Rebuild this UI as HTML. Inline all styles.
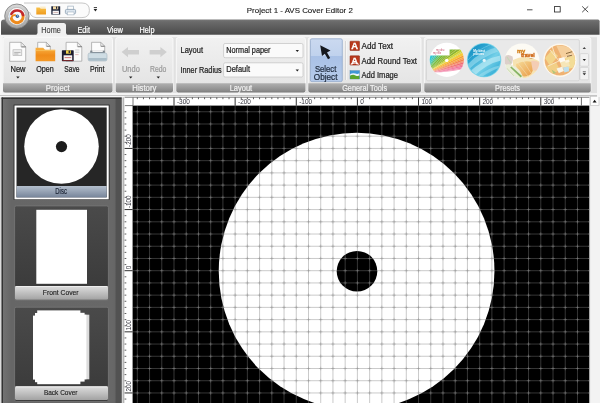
<!DOCTYPE html>
<html><head><meta charset="utf-8"><title>Project 1 - AVS Cover Editor 2</title>
<style>
html,body{margin:0;padding:0;background:#fff;overflow:hidden}
svg{display:block;will-change:transform;font-family:'Liberation Sans', sans-serif}
</style></head><body>
<svg width="600" height="403" viewBox="0 0 600 403">

<defs>
<linearGradient id="gDark" x1="0" y1="0" x2="0" y2="1"><stop offset="0" stop-color="#787878"/><stop offset="0.15" stop-color="#6a6a6a"/><stop offset="1" stop-color="#4a4a4a"/></linearGradient>
<linearGradient id="gGroup" x1="0" y1="0" x2="0" y2="1"><stop offset="0" stop-color="#f1f1f1"/><stop offset="1" stop-color="#e2e2e2"/></linearGradient>
<linearGradient id="gLabel" x1="0" y1="0" x2="0" y2="1"><stop offset="0" stop-color="#b0b0b0"/><stop offset="0.85" stop-color="#888"/><stop offset="1" stop-color="#707070"/></linearGradient>
<linearGradient id="gSel" x1="0" y1="0" x2="0" y2="1"><stop offset="0" stop-color="#cbd9f0"/><stop offset="0.4" stop-color="#c0d2ed"/><stop offset="0.4" stop-color="#a9c1e6"/><stop offset="1" stop-color="#b6cbea"/></linearGradient>
<linearGradient id="gThumbSelLbl" x1="0" y1="0" x2="0" y2="1"><stop offset="0" stop-color="#b4bfcd"/><stop offset="1" stop-color="#77859a"/></linearGradient>
<linearGradient id="gThumbLbl" x1="0" y1="0" x2="0" y2="1"><stop offset="0" stop-color="#dedede"/><stop offset="1" stop-color="#a2a2a2"/></linearGradient>
<linearGradient id="gThumbBg" x1="0" y1="0" x2="0" y2="1"><stop offset="0" stop-color="#4a4a4a"/><stop offset="1" stop-color="#393939"/></linearGradient>
<linearGradient id="gFolder" x1="0" y1="0" x2="0" y2="1"><stop offset="0" stop-color="#f8b244"/><stop offset="0.55" stop-color="#f08c1a"/><stop offset="1" stop-color="#f39826"/></linearGradient>
<linearGradient id="gPanel" x1="0" y1="0" x2="1" y2="0"><stop offset="0" stop-color="#747474"/><stop offset="0.08" stop-color="#666"/><stop offset="0.92" stop-color="#686868"/><stop offset="1" stop-color="#606060"/></linearGradient>
<linearGradient id="gOrbRing" x1="0" y1="0" x2="0" y2="1"><stop offset="0" stop-color="#dadada"/><stop offset="0.5" stop-color="#bcbcbc"/><stop offset="1" stop-color="#a2a2a2"/></linearGradient>
<linearGradient id="gFolderY" x1="0" y1="0" x2="0" y2="1"><stop offset="0" stop-color="#f8c24a"/><stop offset="1" stop-color="#ef9a1c"/></linearGradient>
<radialGradient id="gOrb" cx="0.5" cy="0.5" r="0.5"><stop offset="0" stop-color="#ffffff"/><stop offset="0.72" stop-color="#f4f4f4"/><stop offset="0.8" stop-color="#c8c8c8"/><stop offset="0.92" stop-color="#e8e8e8"/><stop offset="1" stop-color="#9a9a9a"/></radialGradient>
<linearGradient id="gBlueDisc" x1="0" y1="0" x2="1" y2="1"><stop offset="0" stop-color="#1287bb"/><stop offset="0.3" stop-color="#2aa3d0"/><stop offset="0.6" stop-color="#74d0e8"/><stop offset="1" stop-color="#1c9fce"/></linearGradient>
<clipPath id="cCanvas"><rect x="132.6" y="105.6" width="456.9" height="298"/></clipPath>
<clipPath id="cD1"><circle cx="446.8" cy="59.8" r="17.1"/></clipPath>
<clipPath id="cBand1"><path d="M428 55.6 H449.6 V49.6 H466 V68.6 Q452 71.6 441 72.2 H428 Z"/></clipPath>
<clipPath id="cD2"><circle cx="484.1" cy="60.1" r="16.3"/></clipPath>
<clipPath id="cD3"><circle cx="522.1" cy="60.8" r="17.4"/></clipPath>
<clipPath id="cD4"><circle cx="559.9" cy="60.2" r="15.2"/></clipPath>
<linearGradient id="gMap3" x1="0" y1="0" x2="1" y2="1"><stop offset="0" stop-color="#f6dc9a"/><stop offset="1" stop-color="#e99a44"/></linearGradient>
</defs>

<rect x="0" y="0" width="600" height="403" fill="#ffffff"/>
<rect x="0" y="35" width="600" height="62" fill="#e1e1e1"/>
<rect x="0" y="34.8" width="600" height="2.4" fill="#f3f3f3"/>
<rect x="0" y="34.8" width="2.8" height="62" fill="#f6f6f6"/>
<rect x="0" y="93" width="600" height="4.5" fill="#f4f4f4"/>
<rect x="0" y="95" width="600" height="1" fill="#c4c4c4"/>
<path d="M1 34.8 V22.6 Q1 19.6 4 19.6 H598 Q599.6 19.6 599.6 21.2 V34.8 Z" fill="url(#gDark)"/>
<path d="M35 35.5 Q37 35 37.5 33 V25.5 Q37.5 23 40 23 H63.5 Q66 23 66 25.5 V33 Q66.5 35 68.5 35.5 Z" fill="#f0f0f0"/>
<text x="41.3" y="32.8" font-size="8.3" fill="#3a3a3a" text-anchor="start" textLength="19.5" lengthAdjust="spacingAndGlyphs"  stroke="#3a3a3a" stroke-width="0.12">Home</text>
<text x="77.5" y="32.8" font-size="8.3" fill="#fff" text-anchor="start" textLength="12.5" lengthAdjust="spacingAndGlyphs"  stroke="#fff" stroke-width="0.22">Edit</text>
<text x="107" y="32.8" font-size="8.3" fill="#fff" text-anchor="start" textLength="16" lengthAdjust="spacingAndGlyphs"  stroke="#fff" stroke-width="0.22">View</text>
<text x="139.5" y="32.8" font-size="8.3" fill="#fff" text-anchor="start" textLength="15" lengthAdjust="spacingAndGlyphs"  stroke="#fff" stroke-width="0.22">Help</text>
<text x="246.8" y="12.7" font-size="7.8" fill="#1a1a1a" text-anchor="start" textLength="106" lengthAdjust="spacingAndGlyphs"  stroke="#1a1a1a" stroke-width="0.12">Project 1 - AVS Cover Editor 2</text>
<path d="M527 9.8 H532.5" stroke="#222" stroke-width="0.8" fill="none"/>
<rect x="554.6" y="6.6" width="5.6" height="5.4" stroke="#222" stroke-width="0.8" fill="none"/>
<path d="M582.2 6.4 L588.2 12.2 M588.2 6.4 L582.2 12.2" stroke="#222" stroke-width="0.8" fill="none"/>
<path d="M24 3 H82 Q89.4 3 89.4 10.3 Q89.4 17.6 82 17.6 H36 Q31 17 29.5 12" stroke="#b9b9b9" stroke-width="0.8" fill="#fbfbfb"/>
<circle cx="16.9" cy="16.2" r="12.2" fill="url(#gOrbRing)" stroke="#7a7a7a" stroke-width="0.8"/>
<circle cx="16.9" cy="16.3" r="8.9" fill="#fbfbfb" stroke="#a8a8a8" stroke-width="0.6"/>
<path d="M10.69 20.30 A7.4 7.4 0 0 1 11.87 11.37" fill="none" stroke="#c9dbec" stroke-width="1.4" stroke-linecap="round"/>
<path d="M22.63 14.02 A6.1 6.1 0 1 1 11.37 18.69" fill="none" stroke="#ee8a1c" stroke-width="3.0" stroke-linecap="round"/>
<path d="M11.39 14.04 A6.3 6.3 0 0 1 23.19 15.07" fill="none" stroke="#c2282d" stroke-width="2.5" stroke-linecap="round"/>
<path d="M11.6 18.6 Q11.6 14.6 15.2 15.2" fill="none" stroke="#ee8a1c" stroke-width="1.9" stroke-linecap="round"/>
<circle cx="17.4" cy="16.2" r="1.7" fill="#2f5f9e"/>
<circle cx="17.7" cy="15.9" r="0.7" fill="#c6dcf2"/>
<path d="M40.2 6.5 H45.6 V10 H40.2 Z" fill="#fcecc8"/>
<path d="M36.3 7.4 H39.6 L40.8 8.8 H46 V14.6 H36.3 Z" fill="url(#gFolderY)"/>
<rect x="51.3" y="6.3" width="8.9" height="8.3" fill="#1b2238"/>
<rect x="53" y="6.3" width="5.2" height="3" fill="#f0d8a4"/>
<rect x="56" y="6.6" width="1.2" height="2.2" fill="#1b2238"/>
<rect x="52.6" y="10.7" width="6.3" height="3.5" fill="#f6f6f6"/>
<rect x="53.4" y="12" width="4.7" height="0.7" fill="#c9a0a0"/>
<rect x="67.8" y="6.1" width="5.6" height="4" fill="#fdfdfd" stroke="#8fa2b4" stroke-width="0.6"/>
<rect x="65.4" y="9.4" width="10.2" height="4.4" rx="1.2" fill="#dbe5ee" stroke="#7f94a8" stroke-width="0.7"/>
<rect x="67.2" y="12" width="6.8" height="2.9" fill="#fff" stroke="#8fa2b4" stroke-width="0.5"/>
<path d="M93.8 7.6 H97" stroke="#222" stroke-width="0.9"/>
<path d="M93.6 9 H97.2 L95.4 11.4 Z" fill="#222"/>
<rect x="3" y="37.6" width="109.5" height="55" rx="2" fill="url(#gGroup)" stroke="#fafafa" stroke-width="0.9"/>
<path d="M3 83.2 H112.5 V90.6 Q112.5 92.6 110.5 92.6 H5 Q3 92.6 3 90.6 Z" fill="url(#gLabel)"/>
<text x="45.75" y="90.6" font-size="8.3" fill="#f2f2f2" text-anchor="start" textLength="24" lengthAdjust="spacingAndGlyphs"  stroke="#f2f2f2" stroke-width="0.22">Project</text>
<rect x="115.7" y="37.6" width="57.3" height="55" rx="2" fill="url(#gGroup)" stroke="#fafafa" stroke-width="0.9"/>
<path d="M115.7 83.2 H173 V90.6 Q173 92.6 171 92.6 H117.7 Q115.7 92.6 115.7 90.6 Z" fill="url(#gLabel)"/>
<text x="132.35" y="90.6" font-size="8.3" fill="#f2f2f2" text-anchor="start" textLength="24" lengthAdjust="spacingAndGlyphs"  stroke="#f2f2f2" stroke-width="0.22">History</text>
<rect x="176.3" y="37.6" width="129.2" height="55" rx="2" fill="url(#gGroup)" stroke="#fafafa" stroke-width="0.9"/>
<path d="M176.3 83.2 H305.5 V90.6 Q305.5 92.6 303.5 92.6 H178.3 Q176.3 92.6 176.3 90.6 Z" fill="url(#gLabel)"/>
<text x="229.65" y="90.6" font-size="8.3" fill="#f2f2f2" text-anchor="start" textLength="22.5" lengthAdjust="spacingAndGlyphs"  stroke="#f2f2f2" stroke-width="0.22">Layout</text>
<rect x="308.3" y="37.6" width="112.69999999999999" height="55" rx="2" fill="url(#gGroup)" stroke="#fafafa" stroke-width="0.9"/>
<path d="M308.3 83.2 H421 V90.6 Q421 92.6 419 92.6 H310.3 Q308.3 92.6 308.3 90.6 Z" fill="url(#gLabel)"/>
<text x="342.15" y="90.6" font-size="8.3" fill="#f2f2f2" text-anchor="start" textLength="45" lengthAdjust="spacingAndGlyphs"  stroke="#f2f2f2" stroke-width="0.22">General Tools</text>
<rect x="424.3" y="37.6" width="166.49999999999994" height="55" rx="2" fill="url(#gGroup)" stroke="#fafafa" stroke-width="0.9"/>
<path d="M424.3 83.2 H590.8 V90.6 Q590.8 92.6 588.8 92.6 H426.3 Q424.3 92.6 424.3 90.6 Z" fill="url(#gLabel)"/>
<text x="495.04999999999995" y="90.6" font-size="8.3" fill="#f2f2f2" text-anchor="start" textLength="25" lengthAdjust="spacingAndGlyphs"  stroke="#f2f2f2" stroke-width="0.22">Presets</text>
<path d="M9.7 42.3 H21.1 L25.7 46.9 V61.3 H9.7 Z" fill="#fcfcfc" stroke="#9c9c9c" stroke-width="0.7"/>
<path d="M21.1 42.3 V46.9 H25.7 Z" fill="#ededed" stroke="#9c9c9c" stroke-width="0.6"/>
<path d="M21.5 46.9 H25.7" stroke="#6a6a6a" stroke-width="0.7"/>
<rect x="13" y="49.8" width="8.8" height="5.8" fill="#efefef" stroke="#a9a9a9" stroke-width="0.6"/>
<path d="M14.2 52.4 H20.6 M14.2 54 H18.4" stroke="#9a9a9a" stroke-width="0.7"/>
<path d="M37.7 42.3 H46.300000000000004 L50.300000000000004 46.3 V52.3 H37.7 Z" fill="#fcfcfc" stroke="#9c9c9c" stroke-width="0.7"/>
<path d="M46.300000000000004 42.3 V46.3 H50.300000000000004 Z" fill="#ededed" stroke="#9c9c9c" stroke-width="0.6"/>
<path d="M46.7 46.3 H50.300000000000004" stroke="#6a6a6a" stroke-width="0.7"/>
<path d="M35.6 47.8 H43.2 L45 49.7 H55.2 V61.2 H35.6 Z" fill="url(#gFolder)"/>
<path d="M35.6 50.4 H55.2" stroke="#fbc766" stroke-width="0.7"/>
<path d="M66.1 42.3 H77.39999999999999 L81.8 46.699999999999996 V61.199999999999996 H66.1 Z" fill="#fcfcfc" stroke="#9c9c9c" stroke-width="0.7"/>
<path d="M77.39999999999999 42.3 V46.699999999999996 H81.8 Z" fill="#ededed" stroke="#9c9c9c" stroke-width="0.6"/>
<path d="M77.8 46.699999999999996 H81.8" stroke="#6a6a6a" stroke-width="0.7"/>
<path d="M75.2 50 H79.4 M75.2 52.2 H79.4" stroke="#bcbcbc" stroke-width="0.7"/>
<path d="M75.2 54.6 H78.6" stroke="#d9a0a0" stroke-width="0.7"/>
<rect x="61.9" y="50.3" width="11.8" height="10.9" rx="0.6" fill="#1c1c30"/>
<rect x="66" y="50.3" width="4.8" height="3.4" fill="#efd24a"/>
<rect x="68.6" y="50.7" width="1.3" height="2.5" fill="#1c1c30"/>
<rect x="63.6" y="55.3" width="8.6" height="4.7" fill="#f7f4f4"/>
<rect x="64.6" y="57.2" width="6.6" height="0.9" fill="#c96a6a"/>
<rect x="62.4" y="60.2" width="10.8" height="0.8" fill="#8a2a2a"/>
<path d="M91.6 42.3 H100.69999999999999 L104.69999999999999 46.3 V52.8 H91.6 Z" fill="#fcfcfc" stroke="#9c9c9c" stroke-width="0.7"/>
<path d="M100.69999999999999 42.3 V46.3 H104.69999999999999 Z" fill="#ededed" stroke="#9c9c9c" stroke-width="0.6"/>
<path d="M101.1 46.3 H104.69999999999999" stroke="#6a6a6a" stroke-width="0.7"/>
<rect x="90.2" y="50.6" width="14.6" height="3" fill="#7e8890"/>
<rect x="92.4" y="50.2" width="10.4" height="1.8" fill="#f2f2f2"/>
<rect x="88.1" y="53" width="18.9" height="8" rx="1.8" fill="#cfdde4" stroke="#a4b6c0" stroke-width="0.6"/>
<path d="M88.4 58 H106.7 V59.4 Q106.7 60.8 105 60.8 H90.1 Q88.4 60.8 88.4 59.4 Z" fill="#aabdc8"/>
<text x="10.5" y="72.2" font-size="8.3" fill="#222" text-anchor="start" textLength="15" lengthAdjust="spacingAndGlyphs"  stroke="#222" stroke-width="0.22">New</text>
<text x="36.3" y="72.2" font-size="8.3" fill="#222" text-anchor="start" textLength="17.5" lengthAdjust="spacingAndGlyphs"  stroke="#222" stroke-width="0.22">Open</text>
<text x="64.3" y="72.2" font-size="8.3" fill="#222" text-anchor="start" textLength="15.3" lengthAdjust="spacingAndGlyphs"  stroke="#222" stroke-width="0.22">Save</text>
<text x="90" y="72.2" font-size="8.3" fill="#222" text-anchor="start" textLength="14.5" lengthAdjust="spacingAndGlyphs"  stroke="#222" stroke-width="0.22">Print</text>
<path d="M16.2 76.6 H19.6 L17.9 78.6 Z" fill="#222"/>
<path d="M121.6 52 L128 47 V50 H139 V54.4 H128 V57.2 Z" fill="#cfcfcf"/>
<path d="M166.8 52 L160.4 47 V50 H149.6 V54.4 H160.4 V57.2 Z" fill="#cfcfcf"/>
<text x="122" y="72.2" font-size="8.3" fill="#9a9a9a" text-anchor="start" textLength="17.8" lengthAdjust="spacingAndGlyphs"  stroke="#9a9a9a" stroke-width="0.22">Undo</text>
<text x="150" y="72.2" font-size="8.3" fill="#9a9a9a" text-anchor="start" textLength="16.4" lengthAdjust="spacingAndGlyphs"  stroke="#9a9a9a" stroke-width="0.22">Redo</text>
<path d="M129 76.6 H132.4 L130.7 78.6 Z" fill="#222"/>
<path d="M156.6 76.6 H160 L158.3 78.6 Z" fill="#222"/>
<text x="180.5" y="53.4" font-size="8.3" fill="#222" text-anchor="start" textLength="22.5" lengthAdjust="spacingAndGlyphs"  stroke="#222" stroke-width="0.22">Layout</text>
<text x="180.5" y="73.2" font-size="8.3" fill="#222" text-anchor="start" textLength="41.2" lengthAdjust="spacingAndGlyphs"  stroke="#222" stroke-width="0.22">Inner Radius</text>
<rect x="223.6" y="43.5" width="79.4" height="14.2" rx="1.5" fill="#fafafa" stroke="#c2c2c2" stroke-width="0.7"/>
<text x="226.3" y="52.6" font-size="8.3" fill="#222" text-anchor="start" textLength="44.2" lengthAdjust="spacingAndGlyphs"  stroke="#222" stroke-width="0.22">Normal paper</text>
<path d="M295.6 50.1 H299 L297.3 52.1 Z" fill="#222"/>
<rect x="223.6" y="62.8" width="79.4" height="14.2" rx="1.5" fill="#fafafa" stroke="#c2c2c2" stroke-width="0.7"/>
<text x="226.3" y="71.89999999999999" font-size="8.3" fill="#222" text-anchor="start" textLength="23.7" lengthAdjust="spacingAndGlyphs"  stroke="#222" stroke-width="0.22">Default</text>
<path d="M295.6 69.39999999999999 H299 L297.3 71.39999999999999 Z" fill="#222"/>
<rect x="310.4" y="38.8" width="31.9" height="42.8" rx="1.5" fill="url(#gSel)" stroke="#93a9cc" stroke-width="0.8"/>
<path d="M320.2 45.2 L330.5 50.4 L327 52.4 L330.2 58 L328 59.3 L324.8 53.8 L322 56.1 Z" fill="#15181e"/>
<text x="315" y="72.2" font-size="8.3" fill="#1e2a3c" text-anchor="start" textLength="21.3" lengthAdjust="spacingAndGlyphs"  stroke="#1e2a3c" stroke-width="0.22">Select</text>
<text x="313.8" y="80" font-size="8.3" fill="#1e2a3c" text-anchor="start" textLength="23.7" lengthAdjust="spacingAndGlyphs"  stroke="#1e2a3c" stroke-width="0.22">Object</text>
<path d="M345.6 41 V80" stroke="#cbcbcb" stroke-width="0.8"/>
<path d="M346.4 41 V80" stroke="#fafafa" stroke-width="0.8"/>
<rect x="350" y="41.2" width="9.5" height="9.3" rx="0.5" fill="#b8381d" stroke="#8a2410" stroke-width="0.5"/>
<text x="354.75" y="49.400000000000006" font-size="9.4" font-weight="bold" fill="#fff" text-anchor="middle" stroke="#fff" stroke-width="0.3">A</text>
<rect x="350" y="55.8" width="9.5" height="9.3" rx="0.5" fill="#b8381d" stroke="#8a2410" stroke-width="0.5"/>
<text x="354.75" y="64.0" font-size="9.4" font-weight="bold" fill="#fff" text-anchor="middle" stroke="#fff" stroke-width="0.3">A</text>
<path d="M350.6 64.4 Q354.75 61.6 358.9 64.4" stroke="#fff" stroke-width="1.1" fill="none"/>
<rect x="350" y="70.7" width="9.5" height="8.3" fill="#3f97d6" stroke="#3b78a8" stroke-width="0.4"/>
<path d="M350.2 74 Q353 72.6 355.2 73.6 Q357.6 74.6 359.3 73.2 V76 H350.2 Z" fill="#eef6fb"/>
<path d="M350.2 78.9 V75.6 Q353 74.2 355.4 75.4 Q357.6 76.4 359.3 75.6 V78.9 Z" fill="#5aa52e"/>
<text x="361.5" y="48.8" font-size="8.3" fill="#222" text-anchor="start" textLength="31.5" lengthAdjust="spacingAndGlyphs"  stroke="#222" stroke-width="0.22">Add Text</text>
<text x="361.5" y="63.6" font-size="8.3" fill="#222" text-anchor="start" textLength="55.5" lengthAdjust="spacingAndGlyphs"  stroke="#222" stroke-width="0.22">Add Round Text</text>
<text x="361.5" y="78.4" font-size="8.3" fill="#222" text-anchor="start" textLength="36.5" lengthAdjust="spacingAndGlyphs"  stroke="#222" stroke-width="0.22">Add Image</text>
<rect x="426.4" y="39.6" width="153" height="41.2" rx="1.5" fill="#e9e9e9" stroke="#cfcfcf" stroke-width="0.7"/>
<circle cx="446.8" cy="59.8" r="17.1" fill="#fff"/>
<g clip-path="url(#cD1)"><g clip-path="url(#cBand1)">
<path d="M423 75 L416.0 -4.7 L460.6 4.4 Z" fill="#35c8d8"/>
<path d="M423 75 L460.6 4.4 L470.0 10.3 Z" fill="#3cc0b0"/>
<path d="M423 75 L470.0 10.3 L477.6 16.5 Z" fill="#5cbf62"/>
<path d="M423 75 L477.6 16.5 L484.3 23.6 Z" fill="#78b830"/>
<path d="M423 75 L484.3 23.6 L489.3 30.3 Z" fill="#8fb52c"/>
<path d="M423 75 L489.3 30.3 L492.6 35.6 Z" fill="#c9d233"/>
<path d="M423 75 L492.6 35.6 L494.9 39.9 Z" fill="#f7c838"/>
<path d="M423 75 L494.9 39.9 L497.4 45.7 Z" fill="#f59c30"/>
<path d="M423 75 L497.4 45.7 L499.3 50.9 Z" fill="#f27f52"/>
<path d="M423 75 L499.3 50.9 L500.8 56.3 Z" fill="#f06c74"/>
<path d="M423 75 L500.8 56.3 L501.9 61.8 Z" fill="#f0709a"/>
<path d="M423 75 L501.9 61.8 L502.6 67.3 Z" fill="#f59ab8"/>
<path d="M423 75 L502.6 67.3 L503.0 75.0 Z" fill="#f9c4d4"/>
<path d="M423 75 L450.4 -0.2" stroke="#fff" stroke-opacity="0.45" stroke-width="0.7"/>
<path d="M423 75 L465.4 7.2" stroke="#fff" stroke-opacity="0.45" stroke-width="0.7"/>
<path d="M423 75 L474.4 13.7" stroke="#fff" stroke-opacity="0.45" stroke-width="0.7"/>
<path d="M423 75 L481.5 20.4" stroke="#fff" stroke-opacity="0.45" stroke-width="0.7"/>
<path d="M423 75 L486.9 26.9" stroke="#fff" stroke-opacity="0.45" stroke-width="0.7"/>
<path d="M423 75 L491.6 33.8" stroke="#fff" stroke-opacity="0.45" stroke-width="0.7"/>
<path d="M423 75 L496.4 43.1" stroke="#fff" stroke-opacity="0.45" stroke-width="0.7"/>
<path d="M423 75 L498.6 49.0" stroke="#fff" stroke-opacity="0.45" stroke-width="0.7"/>
<path d="M423 75 L500.3 54.3" stroke="#fff" stroke-opacity="0.45" stroke-width="0.7"/>
<path d="M423 75 L501.5 59.7" stroke="#fff" stroke-opacity="0.45" stroke-width="0.7"/>
</g></g>
<circle cx="446.7" cy="60.4" r="1.7" fill="#fff"/>
<text x="436" y="51.4" font-size="2.6" fill="#c8506c" text-anchor="start" >my disc</text>
<text x="433" y="54.2" font-size="2.6" fill="#c8506c" text-anchor="start" >my title</text>
<circle cx="484.1" cy="60.1" r="17.2" fill="#79d3e8"/>
<circle cx="484.1" cy="60.1" r="16.3" fill="url(#gBlueDisc)"/>
<g clip-path="url(#cD2)">
<path d="M466 66 Q480 50 503 46 L503 50 Q482 56 467 71 Z" fill="#a9e4f2" opacity="0.55"/>
<path d="M467 74 Q484 58 503 55 L503 60 Q486 63 471 79 Z" fill="#c6eef7" opacity="0.6"/>
<path d="M474 79 Q488 67 503 65 L503 67 Q490 70 478 80 Z" fill="#a9e4f2" opacity="0.5"/>
<path d="M466 62 Q476 50 492 44" stroke="#8fd8ec" stroke-opacity="0.6" stroke-width="0.8" fill="none"/>
</g>
<circle cx="484.2" cy="60.4" r="1.6" fill="#e4f5fa"/>
<text x="473.2" y="51.8" font-size="3.9" fill="#fff" text-anchor="start" textLength="12" lengthAdjust="spacingAndGlyphs" font-weight="bold">My best</text>
<text x="473.2" y="55" font-size="3.9" fill="#fff" text-anchor="start" textLength="11" lengthAdjust="spacingAndGlyphs" font-weight="bold">pictures</text>
<circle cx="522.1" cy="60.8" r="17.4" fill="#fdfbf4"/>
<g clip-path="url(#cD3)">
<path d="M504 56.5 Q508 53.5 512.5 56.5 Q514 62 510 66 Q506 66 504 63 Z" fill="#dccfca"/>
<path d="M507 57 L511 63" stroke="#c4d6b6" stroke-width="1.2"/>
<path d="M513 60 Q522 55.5 531 58 Q538 60 540 62 V70 Q534 78 524 79 Q516 76 513 70 Z" fill="#f6e3b2"/>
<path d="M516 64 Q524 60 532 62 Q535 68 531 74 Q525 78.5 520 75 Q516 69 516 64 Z" fill="url(#gMap3)"/>
<path d="M531 61 Q536 60 540 63 V69 Q536 72 532.6 70 Z" fill="#f4cdb4"/>
<path d="M505 65 Q510 63 516 67 Q522 72 523 78 Q514 80 508 75 Q505 70 505 65 Z" fill="#eaeed8"/>
<path d="M511.4 66.4 L522 76 L520.8 77.4 L510.2 67.6 Z" fill="#86b464"/>
<path d="M506.5 68 L514 76" stroke="#c3d6aa" stroke-width="0.8"/>
<path d="M517 62 L528 76 M523 60.5 L531 73" stroke="#f8ecd0" stroke-opacity="0.7" stroke-width="0.6"/>
</g>
<text x="517" y="52.5" font-size="5.4" fill="#d5821c" text-anchor="start" textLength="8.3" lengthAdjust="spacingAndGlyphs" font-weight="bold" stroke="#d5821c" stroke-width="0.35">my</text>
<text x="520.9" y="56.5" font-size="5.4" fill="#cf6a1a" text-anchor="start" textLength="13.9" lengthAdjust="spacingAndGlyphs" font-weight="bold" stroke="#cf6a1a" stroke-width="0.35">travel</text>
<text x="529.4" y="58.8" font-size="2.2" fill="#b8803a" text-anchor="start" >disc</text>
<circle cx="559.9" cy="60.2" r="16.7" fill="#fdf7ec"/>
<circle cx="559.9" cy="60.2" r="15.2" fill="#efb272"/>
<g clip-path="url(#cD4)">
<path d="M545 58 L552 50 L558 56 L550 66 Z" fill="#f3d58a"/>
<path d="M556 45 L570 47 L575 56 L562 58 Z" fill="#f5cf9c"/>
<path d="M546 66 L556 62 L560 70 L550 75 Z" fill="#f2cf86"/>
<path d="M565 58 L576 55 L576 67 L568 69 Z" fill="#f3dc96"/>
<path d="M560 62 L568 60 L570 66 L562 68 Z" fill="#f6e6b8"/>
<path d="M550 50 L559 61 M559 61 L572 54 M559 61 L548 66 M552 46 L556 58" stroke="#f9e8c8" stroke-width="0.9" fill="none"/>
<path d="M558.4 58.4 L564.4 57 L565.4 61 L560 62.6 Z" fill="#fefaf2"/>
<path d="M565 60.4 L569 59.6 L569.6 62 L565.6 62.8 Z" fill="#fbf3de"/>
<path d="M556.6 68.6 L562 66.8 L564 71 L558.8 73 Z" fill="#f8f4e8"/>
<path d="M563 67.6 L568.6 66.6 L569.2 71.2 L564.4 72.4 Z" fill="#bfe0ee"/>
<path d="M548.4 70.4 Q552.6 75.2 558.4 76.2 L557.4 77.8 Q551 76.4 547.4 72 Z" fill="#94602c"/>
<path d="M551.5 69.5 L556 72.6 L553.6 74 Z" fill="#b2c67a"/>
<path d="M566 53.6 L572.4 51.6 M567 56.4 L572 55.2" stroke="#6f5226" stroke-width="0.8"/>
</g>
<path d="M582.6 49 H586 L584.3 47 Z" fill="#444"/>
<rect x="580" y="53.6" width="8.6" height="12.6" rx="1" fill="#f2f2f2" stroke="#c9c9c9" stroke-width="0.6"/>
<path d="M582.6 59 H586 L584.3 61 Z" fill="#222"/>
<rect x="580" y="67.4" width="8.6" height="12.4" rx="1" fill="#f2f2f2" stroke="#c9c9c9" stroke-width="0.6"/>
<path d="M582.8 71.8 H585.8" stroke="#222" stroke-width="0.7"/>
<path d="M582.6 73.2 H586 L584.3 75.2 Z" fill="#222"/>
<rect x="0" y="97.4" width="1.6" height="306" fill="#dcdcdc"/>
<rect x="1.6" y="97.5" width="120.2" height="306" fill="url(#gPanel)"/>
<rect x="1.6" y="97.5" width="120.2" height="1.5" fill="#333"/>
<rect x="1.6" y="97.5" width="1.4" height="306" fill="#333"/>
<rect x="115.6" y="99" width="6.2" height="305" fill="#525252"/>
<rect x="121.8" y="97.4" width="1.6" height="306" fill="#d6d6d6"/>
<rect x="123.4" y="97.4" width="1.2" height="306" fill="#8f8f8f"/>
<rect x="13.6" y="104.6" width="96" height="95.2" fill="#2c2c2c"/>
<rect x="15.5" y="106.5" width="92.2" height="91.8" fill="#262626" stroke="#ffffff" stroke-width="2"/>
<rect x="16.5" y="186" width="90.2" height="11.4" fill="url(#gThumbSelLbl)"/>
<circle cx="61.5" cy="146.5" r="37.3" fill="#fff"/>
<circle cx="61.5" cy="146.6" r="5.6" fill="#1c1c1c"/>
<text x="61.1" y="194.2" font-size="8.3" fill="#1a2233" text-anchor="middle" textLength="11.6" lengthAdjust="spacingAndGlyphs"  stroke="#1a2233" stroke-width="0.15">Disc</text>
<rect x="14.6" y="205.9" width="93.8" height="94.2" rx="1.5" fill="url(#gThumbBg)" stroke="#747474" stroke-width="0.9"/>
<rect x="36.3" y="209.8" width="50.7" height="74" fill="#fff"/>
<rect x="15" y="286" width="93" height="13.8" rx="1.5" fill="url(#gThumbLbl)"/>
<rect x="15.4" y="286.2" width="92.2" height="0.8" fill="#f2f2f2"/>
<text x="60.7" y="295" font-size="7.8" fill="#222" text-anchor="middle" textLength="35.8" lengthAdjust="spacingAndGlyphs"  stroke="#222" stroke-width="0.15">Front Cover</text>
<rect x="14.6" y="307.2" width="93.8" height="94.2" rx="1.5" fill="url(#gThumbBg)" stroke="#747474" stroke-width="0.9"/>
<rect x="80" y="314.7" width="9.3" height="64.6" fill="#dcdcdc"/>
<rect x="80" y="314.7" width="6.4" height="64.6" fill="#fff"/>
<rect x="33" y="315.6" width="5" height="64" fill="#fff"/>
<rect x="35" y="313" width="3" height="69.2" fill="#fff"/>
<rect x="80" y="312.8" width="4.6" height="68.8" fill="#fff"/>
<rect x="37.2" y="310.4" width="43.2" height="73.8" fill="#fff"/>
<rect x="15" y="386.3" width="93" height="13.8" rx="1.5" fill="url(#gThumbLbl)"/>
<rect x="15.4" y="386.5" width="92.2" height="0.8" fill="#f2f2f2"/>
<text x="60.7" y="395.4" font-size="7.8" fill="#222" text-anchor="middle" textLength="33.6" lengthAdjust="spacingAndGlyphs"  stroke="#222" stroke-width="0.15">Back Cover</text>
<rect x="124.6" y="97" width="465" height="9" fill="#fff"/>
<rect x="124.4" y="97" width="8.2" height="306" fill="#fff"/>
<rect x="124.6" y="96.8" width="465" height="0.9" fill="#777"/>
<rect x="132.6" y="105.6" width="456.9" height="298" fill="#000"/>
<g clip-path="url(#cCanvas)">
<ellipse cx="356.6" cy="271.2" rx="137.85" ry="138.45" fill="#fff"/>
<circle cx="357" cy="271.2" r="20.3" fill="#000"/>
<path d="M137.33 105.6 V403 M149.56 105.6 V403 M161.78 105.6 V403 M174.01 105.6 V403 M186.24 105.6 V403 M198.46 105.6 V403 M210.69 105.6 V403 M222.91 105.6 V403 M235.14 105.6 V403 M247.37 105.6 V403 M259.59 105.6 V403 M271.82 105.6 V403 M284.04 105.6 V403 M296.27 105.6 V403 M308.50 105.6 V403 M320.72 105.6 V403 M332.95 105.6 V403 M345.17 105.6 V403 M357.40 105.6 V403 M369.63 105.6 V403 M381.85 105.6 V403 M394.08 105.6 V403 M406.30 105.6 V403 M418.53 105.6 V403 M430.76 105.6 V403 M442.98 105.6 V403 M455.21 105.6 V403 M467.43 105.6 V403 M479.66 105.6 V403 M491.89 105.6 V403 M504.11 105.6 V403 M516.34 105.6 V403 M528.56 105.6 V403 M540.79 105.6 V403 M553.02 105.6 V403 M565.24 105.6 V403 M577.47 105.6 V403 M133 111.76 H589.5 M133 123.99 H589.5 M133 136.21 H589.5 M133 148.44 H589.5 M133 160.67 H589.5 M133 172.89 H589.5 M133 185.12 H589.5 M133 197.34 H589.5 M133 209.57 H589.5 M133 221.80 H589.5 M133 234.02 H589.5 M133 246.25 H589.5 M133 258.47 H589.5 M133 270.70 H589.5 M133 282.93 H589.5 M133 295.15 H589.5 M133 307.38 H589.5 M133 319.60 H589.5 M133 331.83 H589.5 M133 344.06 H589.5 M133 356.28 H589.5 M133 368.51 H589.5 M133 380.73 H589.5 M133 392.96 H589.5" stroke="#808080" stroke-opacity="0.42" stroke-width="1" fill="none"/>
<path d="M137.33 105.6 V403 M149.56 105.6 V403 M161.78 105.6 V403 M174.01 105.6 V403 M186.24 105.6 V403 M198.46 105.6 V403 M210.69 105.6 V403 M222.91 105.6 V403 M235.14 105.6 V403 M247.37 105.6 V403 M259.59 105.6 V403 M271.82 105.6 V403 M284.04 105.6 V403 M296.27 105.6 V403 M308.50 105.6 V403 M320.72 105.6 V403 M332.95 105.6 V403 M345.17 105.6 V403 M357.40 105.6 V403 M369.63 105.6 V403 M381.85 105.6 V403 M394.08 105.6 V403 M406.30 105.6 V403 M418.53 105.6 V403 M430.76 105.6 V403 M442.98 105.6 V403 M455.21 105.6 V403 M467.43 105.6 V403 M479.66 105.6 V403 M491.89 105.6 V403 M504.11 105.6 V403 M516.34 105.6 V403 M528.56 105.6 V403 M540.79 105.6 V403 M553.02 105.6 V403 M565.24 105.6 V403 M577.47 105.6 V403" stroke="#909090" stroke-opacity="0.38" stroke-width="1" fill="none" stroke-dasharray="3.6 8.626" stroke-dashoffset="7.864"/>
<path d="M133 111.76 H589.5 M133 123.99 H589.5 M133 136.21 H589.5 M133 148.44 H589.5 M133 160.67 H589.5 M133 172.89 H589.5 M133 185.12 H589.5 M133 197.34 H589.5 M133 209.57 H589.5 M133 221.80 H589.5 M133 234.02 H589.5 M133 246.25 H589.5 M133 258.47 H589.5 M133 270.70 H589.5 M133 282.93 H589.5 M133 295.15 H589.5 M133 307.38 H589.5 M133 319.60 H589.5 M133 331.83 H589.5 M133 344.06 H589.5 M133 356.28 H589.5 M133 368.51 H589.5 M133 380.73 H589.5 M133 392.96 H589.5" stroke="#909090" stroke-opacity="0.38" stroke-width="1" fill="none" stroke-dasharray="3.6 8.626" stroke-dashoffset="9.694"/>
</g>
<path d="M137.33 97.4 V99.2 M143.44 97.4 V99.2 M149.56 97.4 V99.2 M155.67 97.4 V99.2 M161.78 97.4 V99.2 M167.90 97.4 V99.2 M180.12 97.4 V99.2 M186.24 97.4 V99.2 M192.35 97.4 V99.2 M198.46 97.4 V99.2 M124.6 111.76 H126.3 M204.57 97.4 V99.2 M124.6 117.88 H126.3 M210.69 97.4 V99.2 M124.6 123.99 H126.3 M216.80 97.4 V99.2 M124.6 130.10 H126.3 M222.91 97.4 V99.2 M124.6 136.21 H126.3 M229.03 97.4 V99.2 M124.6 142.33 H126.3 M241.25 97.4 V99.2 M124.6 154.55 H126.3 M247.37 97.4 V99.2 M124.6 160.67 H126.3 M253.48 97.4 V99.2 M124.6 166.78 H126.3 M259.59 97.4 V99.2 M124.6 172.89 H126.3 M265.70 97.4 V99.2 M124.6 179.00 H126.3 M271.82 97.4 V99.2 M124.6 185.12 H126.3 M277.93 97.4 V99.2 M124.6 191.23 H126.3 M284.04 97.4 V99.2 M124.6 197.34 H126.3 M290.16 97.4 V99.2 M124.6 203.46 H126.3 M302.38 97.4 V99.2 M124.6 215.68 H126.3 M308.50 97.4 V99.2 M124.6 221.80 H126.3 M314.61 97.4 V99.2 M124.6 227.91 H126.3 M320.72 97.4 V99.2 M124.6 234.02 H126.3 M326.83 97.4 V99.2 M124.6 240.13 H126.3 M332.95 97.4 V99.2 M124.6 246.25 H126.3 M339.06 97.4 V99.2 M124.6 252.36 H126.3 M345.17 97.4 V99.2 M124.6 258.47 H126.3 M351.29 97.4 V99.2 M124.6 264.59 H126.3 M363.51 97.4 V99.2 M124.6 276.81 H126.3 M369.63 97.4 V99.2 M124.6 282.93 H126.3 M375.74 97.4 V99.2 M124.6 289.04 H126.3 M381.85 97.4 V99.2 M124.6 295.15 H126.3 M387.96 97.4 V99.2 M124.6 301.26 H126.3 M394.08 97.4 V99.2 M124.6 307.38 H126.3 M400.19 97.4 V99.2 M124.6 313.49 H126.3 M406.30 97.4 V99.2 M124.6 319.60 H126.3 M412.42 97.4 V99.2 M124.6 325.72 H126.3 M424.64 97.4 V99.2 M124.6 337.94 H126.3 M430.76 97.4 V99.2 M124.6 344.06 H126.3 M436.87 97.4 V99.2 M124.6 350.17 H126.3 M442.98 97.4 V99.2 M124.6 356.28 H126.3 M449.09 97.4 V99.2 M124.6 362.39 H126.3 M455.21 97.4 V99.2 M124.6 368.51 H126.3 M461.32 97.4 V99.2 M124.6 374.62 H126.3 M467.43 97.4 V99.2 M124.6 380.73 H126.3 M473.55 97.4 V99.2 M124.6 386.85 H126.3 M485.77 97.4 V99.2 M124.6 399.07 H126.3 M491.89 97.4 V99.2 M498.00 97.4 V99.2 M504.11 97.4 V99.2 M510.22 97.4 V99.2 M516.34 97.4 V99.2 M522.45 97.4 V99.2 M528.56 97.4 V99.2 M534.68 97.4 V99.2 M546.90 97.4 V99.2 M553.02 97.4 V99.2 M559.13 97.4 V99.2 M565.24 97.4 V99.2 M571.36 97.4 V99.2 M577.47 97.4 V99.2" stroke="#333" stroke-width="0.8" fill="none"/>
<path d="M174.01 97.4 V105.6 M235.14 97.4 V105.6 M124.6 148.44 H132.6 M296.27 97.4 V105.6 M124.6 209.57 H132.6 M357.40 97.4 V105.6 M124.6 270.70 H132.6 M418.53 97.4 V105.6 M124.6 331.83 H132.6 M479.66 97.4 V105.6 M124.6 392.96 H132.6 M540.79 97.4 V105.6" stroke="#1a1a1a" stroke-width="0.9" fill="none"/>
<path d="M124.8 105.6 H133 M133 97.4 V105.6" stroke="#555" stroke-width="0.8" fill="none"/>
<path d="M581.4 97.4 V105.6" stroke="#444" stroke-width="0.8" fill="none"/>
<text x="176.91" y="103.9" font-size="7.3" fill="#33333c" text-anchor="start" textLength="12.9" lengthAdjust="spacingAndGlyphs" >-300</text>
<text x="238.04" y="103.9" font-size="7.3" fill="#33333c" text-anchor="start" textLength="12.9" lengthAdjust="spacingAndGlyphs" >-200</text>
<text x="299.17" y="103.9" font-size="7.3" fill="#33333c" text-anchor="start" textLength="12.9" lengthAdjust="spacingAndGlyphs" >-100</text>
<text x="360.3" y="103.9" font-size="7.3" fill="#33333c" text-anchor="start" textLength="3.6" lengthAdjust="spacingAndGlyphs" >0</text>
<text x="421.43" y="103.9" font-size="7.3" fill="#33333c" text-anchor="start" textLength="10.6" lengthAdjust="spacingAndGlyphs" >100</text>
<text x="482.56" y="103.9" font-size="7.3" fill="#33333c" text-anchor="start" textLength="10.6" lengthAdjust="spacingAndGlyphs" >200</text>
<text x="543.69" y="103.9" font-size="7.3" fill="#33333c" text-anchor="start" textLength="10.6" lengthAdjust="spacingAndGlyphs" >300</text>
<text transform="translate(130.5 146.94) rotate(-90)" font-size="7.3" fill="#33333c" textLength="12.6" lengthAdjust="spacingAndGlyphs">-200</text>
<text transform="translate(130.5 208.07) rotate(-90)" font-size="7.3" fill="#33333c" textLength="12.6" lengthAdjust="spacingAndGlyphs">-100</text>
<text transform="translate(130.5 269.20) rotate(-90)" font-size="7.3" fill="#33333c" textLength="3.6" lengthAdjust="spacingAndGlyphs">0</text>
<text transform="translate(130.5 330.33) rotate(-90)" font-size="7.3" fill="#33333c" textLength="10.4" lengthAdjust="spacingAndGlyphs">100</text>
<text transform="translate(130.5 391.46) rotate(-90)" font-size="7.3" fill="#33333c" textLength="10.4" lengthAdjust="spacingAndGlyphs">200</text>
<rect x="589.5" y="97" width="1" height="306" fill="#cfcfcf"/>
<rect x="590.5" y="97" width="9.5" height="306" fill="#f3f3f3"/>
<rect x="590.6" y="96.6" width="8.4" height="9" fill="#fdfdfd" stroke="#bdbdbd" stroke-width="0.6"/>
<path d="M592.6 102.4 H596.6 L594.6 99.8 Z" fill="#111"/>
<rect x="597" y="35" width="3" height="62" fill="#f6f6f6"/>
</svg>
</body></html>
